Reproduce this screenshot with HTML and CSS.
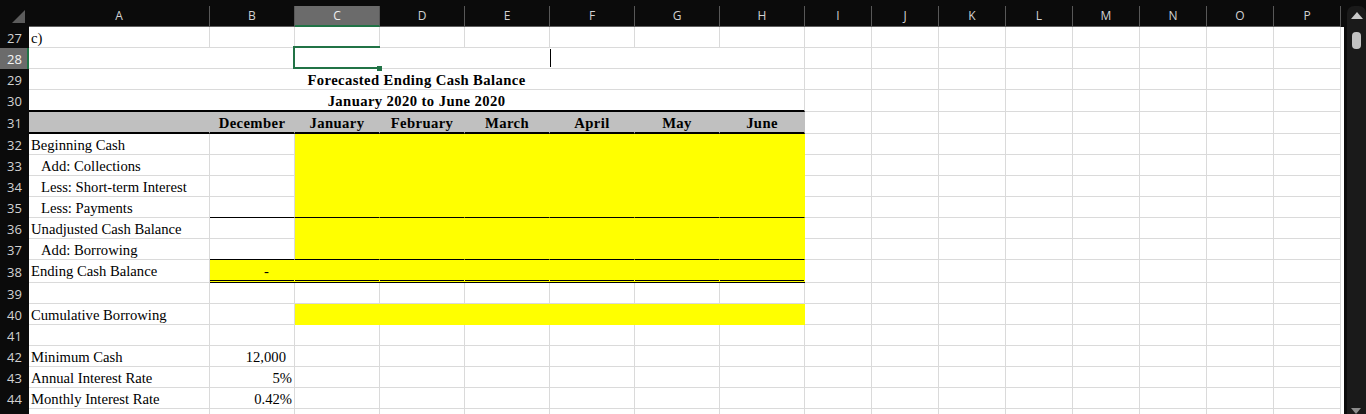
FILE: index.html
```html
<!DOCTYPE html>
<html lang="en">
<head>
    <meta charset="UTF-8">
    <title>Forecasted Ending Cash Balance</title>
    <link rel="stylesheet" href="styles.css">
</head>
<body>
<div class="sheet">
    <div class="grid">
        <!-- column letters -->
        <div class="hrow">
            <div class="hcorner">
                <svg width="29" height="27" viewBox="0 0 29 27"><polygon points="12,23 25,23 25,10" fill="#5c5c5c"/></svg>
            </div>
            <div class="hc a">A</div>
            <div class="hc m">B</div>
            <div class="hc m sel">C</div>
            <div class="hc m">D</div>
            <div class="hc m">E</div>
            <div class="hc m">F</div>
            <div class="hc m">G</div>
            <div class="hc m">H</div>
            <div class="hc s">I</div>
            <div class="hc s">J</div>
            <div class="hc s">K</div>
            <div class="hc s">L</div>
            <div class="hc s">M</div>
            <div class="hc s">N</div>
            <div class="hc s">O</div>
            <div class="hc s">P</div>
            <div class="hc edge"></div>
        </div>

        <div class="row">
            <div class="rh">27</div>
            <div class="c a">c)</div>
            <div class="c m"></div><div class="c m"></div><div class="c m"></div><div class="c m"></div><div class="c m"></div><div class="c m"></div><div class="c m"></div>
            <div class="c s"></div><div class="c s"></div><div class="c s"></div><div class="c s"></div><div class="c s"></div><div class="c s"></div><div class="c s"></div><div class="c s"></div>
            <div class="c edge"></div>
        </div>

        <div class="row">
            <div class="rh sel">28</div>
            <div class="c span"></div>
            <div class="c s"></div><div class="c s"></div><div class="c s"></div><div class="c s"></div><div class="c s"></div><div class="c s"></div><div class="c s"></div><div class="c s"></div>
            <div class="c edge"></div>
            <div class="active"><span class="handle"></span></div>
            <div class="caret"></div>
        </div>

        <div class="row">
            <div class="rh">29</div>
            <div class="c span title">Forecasted Ending Cash Balance</div>
            <div class="c s"></div><div class="c s"></div><div class="c s"></div><div class="c s"></div><div class="c s"></div><div class="c s"></div><div class="c s"></div><div class="c s"></div>
            <div class="c edge"></div>
        </div>

        <div class="row tall">
            <div class="rh">30</div>
            <div class="c span title thick">January 2020 to June 2020</div>
            <div class="c s"></div><div class="c s"></div><div class="c s"></div><div class="c s"></div><div class="c s"></div><div class="c s"></div><div class="c s"></div><div class="c s"></div>
            <div class="c edge"></div>
        </div>

        <div class="row tall">
            <div class="rh">31</div>
            <div class="c a gray"></div>
            <div class="c m gray">December</div>
            <div class="c m gray">January</div>
            <div class="c m gray">February</div>
            <div class="c m gray">March</div>
            <div class="c m gray">April</div>
            <div class="c m gray">May</div>
            <div class="c m gray">June</div>
            <div class="c s"></div><div class="c s"></div><div class="c s"></div><div class="c s"></div><div class="c s"></div><div class="c s"></div><div class="c s"></div><div class="c s"></div>
            <div class="c edge"></div>
        </div>

        <div class="row">
            <div class="rh">32</div>
            <div class="c a">Beginning Cash</div>
            <div class="c m"></div>
            <div class="c m y"></div><div class="c m y"></div><div class="c m y"></div><div class="c m y"></div><div class="c m y"></div><div class="c m y"></div>
            <div class="c s"></div><div class="c s"></div><div class="c s"></div><div class="c s"></div><div class="c s"></div><div class="c s"></div><div class="c s"></div><div class="c s"></div>
            <div class="c edge"></div>
        </div>

        <div class="row">
            <div class="rh">33</div>
            <div class="c a ind">Add: Collections</div>
            <div class="c m"></div>
            <div class="c m y"></div><div class="c m y"></div><div class="c m y"></div><div class="c m y"></div><div class="c m y"></div><div class="c m y"></div>
            <div class="c s"></div><div class="c s"></div><div class="c s"></div><div class="c s"></div><div class="c s"></div><div class="c s"></div><div class="c s"></div><div class="c s"></div>
            <div class="c edge"></div>
        </div>

        <div class="row">
            <div class="rh">34</div>
            <div class="c a ind">Less: Short-term Interest</div>
            <div class="c m"></div>
            <div class="c m y"></div><div class="c m y"></div><div class="c m y"></div><div class="c m y"></div><div class="c m y"></div><div class="c m y"></div>
            <div class="c s"></div><div class="c s"></div><div class="c s"></div><div class="c s"></div><div class="c s"></div><div class="c s"></div><div class="c s"></div><div class="c s"></div>
            <div class="c edge"></div>
        </div>

        <div class="row">
            <div class="rh">35</div>
            <div class="c a ind">Less: Payments</div>
            <div class="c m line"></div>
            <div class="c m y line"></div><div class="c m y line"></div><div class="c m y line"></div><div class="c m y line"></div><div class="c m y line"></div><div class="c m y line"></div>
            <div class="c s"></div><div class="c s"></div><div class="c s"></div><div class="c s"></div><div class="c s"></div><div class="c s"></div><div class="c s"></div><div class="c s"></div>
            <div class="c edge"></div>
        </div>

        <div class="row">
            <div class="rh">36</div>
            <div class="c a">Unadjusted Cash Balance</div>
            <div class="c m"></div>
            <div class="c m y"></div><div class="c m y"></div><div class="c m y"></div><div class="c m y"></div><div class="c m y"></div><div class="c m y"></div>
            <div class="c s"></div><div class="c s"></div><div class="c s"></div><div class="c s"></div><div class="c s"></div><div class="c s"></div><div class="c s"></div><div class="c s"></div>
            <div class="c edge"></div>
        </div>

        <div class="row">
            <div class="rh">37</div>
            <div class="c a ind">Add: Borrowing</div>
            <div class="c m line"></div>
            <div class="c m y line"></div><div class="c m y line"></div><div class="c m y line"></div><div class="c m y line"></div><div class="c m y line"></div><div class="c m y line"></div>
            <div class="c s"></div><div class="c s"></div><div class="c s"></div><div class="c s"></div><div class="c s"></div><div class="c s"></div><div class="c s"></div><div class="c s"></div>
            <div class="c edge"></div>
        </div>

        <div class="row total">
            <div class="rh">38</div>
            <div class="c a lift">Ending Cash Balance</div>
            <div class="c m y dbl dash">-</div>
            <div class="c m y dbl"></div><div class="c m y dbl"></div><div class="c m y dbl"></div><div class="c m y dbl"></div><div class="c m y dbl"></div><div class="c m y dbl"></div>
            <div class="c s"></div><div class="c s"></div><div class="c s"></div><div class="c s"></div><div class="c s"></div><div class="c s"></div><div class="c s"></div><div class="c s"></div>
            <div class="c edge"></div>
        </div>

        <div class="row">
            <div class="rh">39</div>
            <div class="c a"></div>
            <div class="c m"></div><div class="c m"></div><div class="c m"></div><div class="c m"></div><div class="c m"></div><div class="c m"></div><div class="c m"></div>
            <div class="c s"></div><div class="c s"></div><div class="c s"></div><div class="c s"></div><div class="c s"></div><div class="c s"></div><div class="c s"></div><div class="c s"></div>
            <div class="c edge"></div>
        </div>

        <div class="row">
            <div class="rh">40</div>
            <div class="c a">Cumulative Borrowing</div>
            <div class="c m"></div>
            <div class="c m y"></div><div class="c m y"></div><div class="c m y"></div><div class="c m y"></div><div class="c m y"></div><div class="c m y"></div>
            <div class="c s"></div><div class="c s"></div><div class="c s"></div><div class="c s"></div><div class="c s"></div><div class="c s"></div><div class="c s"></div><div class="c s"></div>
            <div class="c edge"></div>
        </div>

        <div class="row">
            <div class="rh">41</div>
            <div class="c a"></div>
            <div class="c m"></div><div class="c m"></div><div class="c m"></div><div class="c m"></div><div class="c m"></div><div class="c m"></div><div class="c m"></div>
            <div class="c s"></div><div class="c s"></div><div class="c s"></div><div class="c s"></div><div class="c s"></div><div class="c s"></div><div class="c s"></div><div class="c s"></div>
            <div class="c edge"></div>
        </div>

        <div class="row">
            <div class="rh">42</div>
            <div class="c a">Minimum Cash</div>
            <div class="c m num acct">12,000</div>
            <div class="c m"></div><div class="c m"></div><div class="c m"></div><div class="c m"></div><div class="c m"></div><div class="c m"></div>
            <div class="c s"></div><div class="c s"></div><div class="c s"></div><div class="c s"></div><div class="c s"></div><div class="c s"></div><div class="c s"></div><div class="c s"></div>
            <div class="c edge"></div>
        </div>

        <div class="row">
            <div class="rh">43</div>
            <div class="c a">Annual Interest Rate</div>
            <div class="c m num">5%</div>
            <div class="c m"></div><div class="c m"></div><div class="c m"></div><div class="c m"></div><div class="c m"></div><div class="c m"></div>
            <div class="c s"></div><div class="c s"></div><div class="c s"></div><div class="c s"></div><div class="c s"></div><div class="c s"></div><div class="c s"></div><div class="c s"></div>
            <div class="c edge"></div>
        </div>

        <div class="row">
            <div class="rh">44</div>
            <div class="c a">Monthly Interest Rate</div>
            <div class="c m num">0.42%</div>
            <div class="c m"></div><div class="c m"></div><div class="c m"></div><div class="c m"></div><div class="c m"></div><div class="c m"></div>
            <div class="c s"></div><div class="c s"></div><div class="c s"></div><div class="c s"></div><div class="c s"></div><div class="c s"></div><div class="c s"></div><div class="c s"></div>
            <div class="c edge"></div>
        </div>

        <div class="row">
            <div class="rh"></div>
            <div class="c a"></div>
            <div class="c m"></div><div class="c m"></div><div class="c m"></div><div class="c m"></div><div class="c m"></div><div class="c m"></div><div class="c m"></div>
            <div class="c s"></div><div class="c s"></div><div class="c s"></div><div class="c s"></div><div class="c s"></div><div class="c s"></div><div class="c s"></div><div class="c s"></div>
            <div class="c edge"></div>
        </div>
    </div>

    <!-- vertical scrollbar -->
    <div class="vscroll">
        <div class="track">
            <svg class="arrow" width="12" height="7" viewBox="0 0 12 7"><polygon points="6,0 12,7 0,7" fill="#c9c9c9"/></svg>
            <div class="thumb"></div>
            <div class="fill"></div>
            <svg class="arrow down" width="10" height="6" viewBox="0 0 10 6"><polygon points="0,0 10,0 5,6" fill="#8c8c8c"/></svg>
        </div>
    </div>
</div>
</body>
</html>
```

FILE: styles.css
```css
body {
    margin: 0;
    padding: 0;
    background-color: #ffffff;
    overflow: hidden;
}

.sheet {
    display: flex;
    height: 414px;
    overflow: hidden;
}

.grid {
    width: 1344px;
    flex: none;
}

/* Column header strip */
.hrow {
    display: flex;
    height: 27px;
    background-color: #0b0b0b;
}

.hcorner {
    width: 29px;
    height: 27px;
    flex: none;
}

.hcorner svg {
    display: block;
}

.hc {
    box-sizing: border-box;
    height: 21px;
    margin-top: 6px;
    border-right: 1px solid #585858;
    border-bottom: 1px solid #5f5f5f;
    color: #d2d2d2;
    font-family: "Open Sans", "Noto Sans", sans-serif;
    font-size: 12px;
    line-height: 19px;
    text-align: center;
    flex: none;
}

.hc.sel {
    background-color: #6b6b6b;
    color: #f0f0f0;
    border-bottom: 2px solid #217346;
}

.hc.edge {
    border-right: none;
}

/* Rows */
.row {
    display: flex;
    height: 21px;
    position: relative;
}

.row.tall {
    height: 22px;
}

.row.total {
    height: 23px;
}

.rh {
    width: 29px;
    flex: none;
    display: flex;
    align-items: center;
    justify-content: center;
    background-color: #0b0b0b;
    color: #d2d2d2;
    font-family: "Open Sans", "Noto Sans", sans-serif;
    font-size: 13px;
}

.rh.sel {
    background-color: #6b6b6b;
    color: #f4f4f4;
    box-shadow: inset -2px 0 0 #217346;
}

.c {
    box-sizing: border-box;
    flex: none;
    display: flex;
    align-items: flex-end;
    border-right: 1px solid #dadada;
    border-bottom: 1px solid #dadada;
    padding: 0 2px;
    font-family: "Liberation Serif", "Times New Roman", serif;
    font-size: 11pt;
    line-height: 17px;
    color: #000;
    white-space: nowrap;
}

.a { width: 181px; }
.m { width: 85px; }
.s { width: 67px; }
.span { width: 776px; }

.c.edge {
    width: 3px;
    border: none;
    padding: 0;
}

.ind {
    padding-left: 12px;
}

.lift {
    padding-bottom: 2px;
}

.title {
    justify-content: center;
    font-weight: bold;
    letter-spacing: 0.4px;
}

.thick {
    border-bottom: 2px solid #000;
}

.gray {
    background-color: #c0c0c0;
    border-right-color: transparent;
    border-bottom: 2px solid #000;
    justify-content: center;
    font-weight: bold;
    letter-spacing: 0.4px;
}

.y {
    background-color: #ffff00;
    border-right-color: transparent;
    border-bottom-color: transparent;
}

.line {
    border-bottom-color: #000;
}

.dbl {
    border-bottom: 3px double #000;
}

.num {
    justify-content: flex-end;
    padding-right: 2px;
}

.num.acct {
    padding-right: 8px;
}

.dash {
    justify-content: flex-end;
    padding-right: 25px;
}

/* Active cell C28 and text caret */
.active {
    position: absolute;
    left: 293px;
    top: -2px;
    width: 87px;
    height: 23px;
    box-sizing: border-box;
    border-left: 2px solid #217346;
    border-top: 2px solid #217346;
    border-bottom: 2px solid #217346;
}

.handle {
    position: absolute;
    right: -2px;
    bottom: -4px;
    width: 5px;
    height: 5px;
    background-color: #217346;
}

.caret {
    position: absolute;
    left: 550px;
    top: 1px;
    width: 1px;
    height: 18px;
    background-color: #000;
}

/* Scrollbar */
.vscroll {
    width: 22px;
    flex: none;
    background-color: #0b0b0b;
}

.track {
    box-sizing: border-box;
    margin: 6px 0 0 3px;
    height: 408px;
    background-color: #1a1a1a;
    border-radius: 7px 7px 0 0;
    display: flex;
    flex-direction: column;
    align-items: center;
    padding-top: 6px;
}

.arrow {
    display: block;
    flex: none;
}

.thumb {
    width: 9px;
    height: 17px;
    margin-top: 13px;
    margin-right: 1px;
    background-color: #c2c2c2;
    border-radius: 4px;
    flex: none;
}

.fill {
    flex: 1;
}

.arrow.down {
    margin-right: 1px;
}
```
